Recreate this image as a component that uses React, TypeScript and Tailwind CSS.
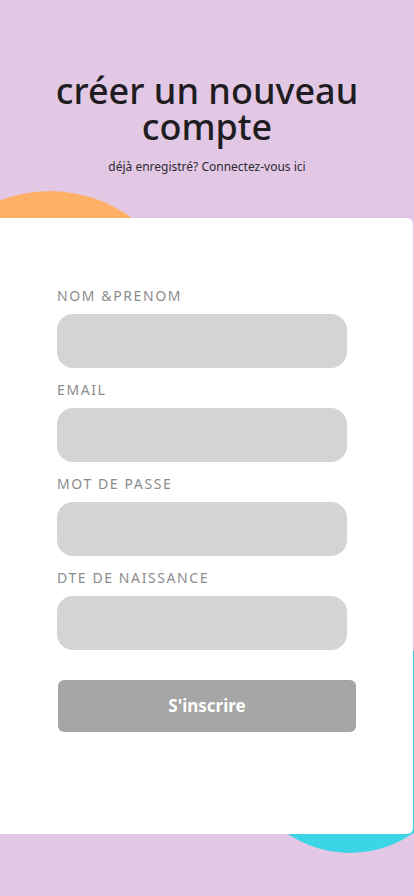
import React from "react";

const fields = ["NOM &PRENOM", "EMAIL", "MOT DE PASSE", "DTE DE NAISSANCE"];

export default function App() {
  return (
    <div className="relative min-h-[896px] w-full overflow-hidden bg-[#e2c8e5] font-['Noto_Sans',sans-serif]">
      {/* decorative circles */}
      <div className="absolute left-[-88px] top-[191px] h-[276px] w-[276px] rounded-full bg-[#ffb067]" />
      <div className="absolute left-[239px] top-[631px] h-[222px] w-[222px] rounded-full bg-[#3bd5e6]" />

      {/* Header */}
      <div className="relative flex h-[218px] flex-col items-center pt-[73px]">
        <h1 className="text-center text-[36px] font-medium leading-[36px] text-[#1f1d22]">
          créer un nouveau
          <br />
          compte
        </h1>
        <p className="mt-[14px] text-[12px] leading-[16px] text-[#2d2a30]">
          déjà enregistré? Connectez-vous ici
        </p>
      </div>

      {/* Card */}
      <div className="relative h-[616px] w-[413px] rounded-r-md bg-white pl-[57px] pt-[68px]">
        <div className="flex w-[290px] flex-col gap-3">
          {fields.map((label) => (
            <div key={label} className="flex flex-col gap-2">
              <span className="text-[14px] leading-[20px] tracking-[1.6px] text-[#8c8c8c]">
                {label}
              </span>
              <div className="h-[54px] w-full rounded-2xl bg-[#d4d4d4]" />
            </div>
          ))}
        </div>
        <button className="mt-[30px] ml-[1px] h-[52px] w-[298px] rounded-md bg-[#a6a6a6] text-[17px] font-bold text-white">
          S'inscrire
        </button>
      </div>
    </div>
  );
}
